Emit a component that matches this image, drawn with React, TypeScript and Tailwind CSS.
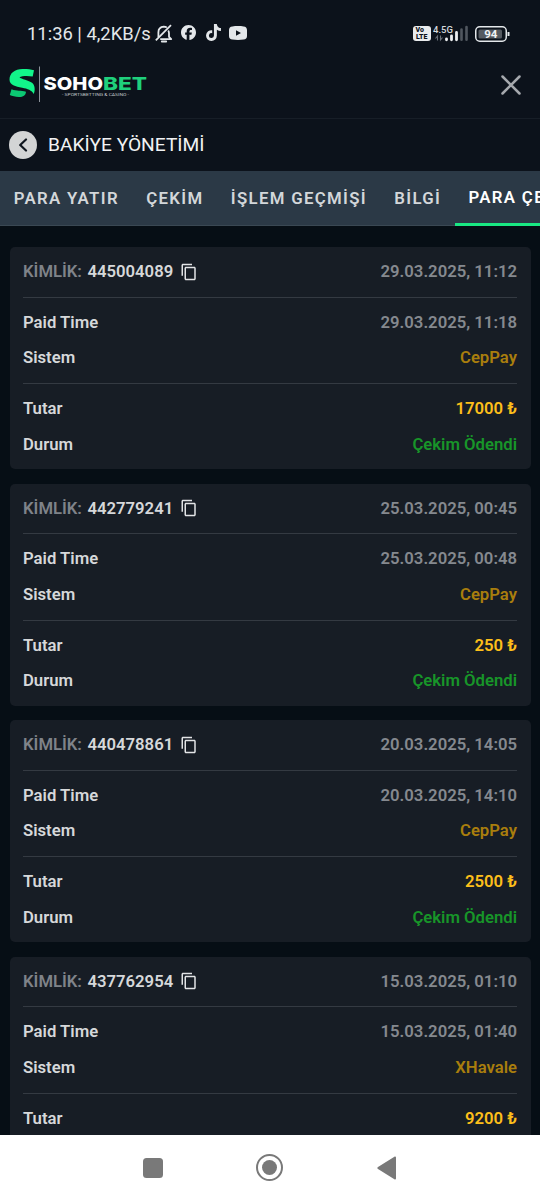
import { FaFacebook, FaTiktok } from 'react-icons/fa6'
import { MdContentCopy } from 'react-icons/md'

interface Withdrawal {
    id: string
    createdAt: string
    paidAt: string
    system: string
    amount: number
    status: string
}

const WITHDRAWALS: Withdrawal[] = [
    { id: '445004089', createdAt: '29.03.2025, 11:12', paidAt: '29.03.2025, 11:18', system: 'CepPay', amount: 17000, status: 'Çekim Ödendi' },
    { id: '442779241', createdAt: '25.03.2025, 00:45', paidAt: '25.03.2025, 00:48', system: 'CepPay', amount: 250, status: 'Çekim Ödendi' },
    { id: '440478861', createdAt: '20.03.2025, 14:05', paidAt: '20.03.2025, 14:10', system: 'CepPay', amount: 2500, status: 'Çekim Ödendi' },
    { id: '437762954', createdAt: '15.03.2025, 01:10', paidAt: '15.03.2025, 01:40', system: 'XHavale', amount: 9200, status: 'Çekim Ödendi' },
]

const TABS = ['PARA YATIR', 'ÇEKİM', 'İŞLEM GEÇMİŞİ', 'BİLGİ', 'PARA ÇEKME']

function BellOffIcon() {
    return (
        <svg width="18" height="19" viewBox="0 0 18 19" fill="none" stroke="currentColor" strokeWidth="1.8">
            <path d="M3.400 13V8.300C3.400 5 5.600 3 8.800 2.700c1.300 0 2.200.3 3 .8M13.200 6.600c.6.9.8 1.600.8 2.600v3.600l2.200 2.400H5.200" strokeLinejoin="round" />
            <path d="M.8 16.400 16 1.200" />
            <path d="M6.800 17.500h4.400" strokeLinecap="round" />
        </svg>
    )
}

function YoutubeIcon() {
    return (
        <svg width="18" height="14" viewBox="0 0 18 14" fill="currentColor">
            <path fillRule="evenodd" d="M3.400.4C6.600 0 11.400 0 14.600.4 16.800.6 18 1.900 18 4v6c0 2.100-1.200 3.400-3.400 3.600-3.200.4-8 .4-11.200 0C1.200 13.400 0 12.100 0 10V4C0 1.900 1.200.6 3.400.4ZM7 4.200v5.600L12 7Z" />
        </svg>
    )
}

function StatusBar() {
    return (
        <div className="flex h-[50px] shrink-0 items-end justify-between pr-[30px] pl-[27px] text-[#e4e7ea]">
            <div className="flex h-[33px] items-center">
                <span className="mr-[1.5px] w-[126px] text-[18.4px] whitespace-nowrap">11:36 | 4,2KB/s</span>
                <BellOffIcon />
                <FaFacebook className="mb-[2px] ml-[8.5px] size-[15px]" />
                <FaTiktok className="mb-[2px] ml-[9px] size-[17px]" />
                <span className="mb-[2px] ml-[7px]"><YoutubeIcon /></span>
            </div>
            <div className="flex h-[33px] items-center">
                <div className="flex h-[15px] w-[17.5px] flex-col items-center justify-center rounded-[3px] bg-[#e9ebed] text-[7px] leading-[7px] font-black text-[#0c121b]">
                    <span className="-ml-1">Vo</span>
                    <span>LTE</span>
                </div>
                <svg className="ml-[2.5px]" width="35" height="19" viewBox="0 0 35 19">
                    <text x="0" y="8.500" fontSize="9.500" fontWeight="500" fill="#d5d9dd" textLength="20">4.5G</text>
                    <path d="M4.500 16.500v-4.500L2.500 14.500M7.500 11.500v4.500L9.500 13.500" stroke="#6a7078" strokeWidth="1.100" fill="none" />
                    <path d="M13.500 15.800v-1M18.500 15.800v-4M23.500 15.800V8.500" stroke="#eceef0" strokeWidth="2.800" strokeLinecap="round" />
                    <path d="M28.500 15.800V5.500M33.500 15.800V3" stroke="#51575f" strokeWidth="2.600" strokeLinecap="round" />
                </svg>
                <svg className="ml-[7px]" width="35" height="16" viewBox="0 0 35 16">
                    <rect x=".75" y=".75" width="30.500" height="14.500" rx="4" fill="none" stroke="#e4e7ea" strokeWidth="1.500" />
                    <rect x="3.500" y="3.500" width="23.500" height="9" rx="1.500" fill="#555a61" />
                    <path d="M33.500 6v4" stroke="#e4e7ea" strokeWidth="2" />
                    <text x="15.800" y="12" fontSize="11.500" fontWeight="700" fill="#f2f3f4" textAnchor="middle">94</text>
                </svg>
            </div>
        </div>
    )
}

function Logo() {
    return (
        <svg width="140" height="38" viewBox="0 0 140 38" className="mt-[5px] overflow-visible">
            <path d="M25 2.300 23.700 8.500C19 7.500 13 7.700 10.500 9.200c1.500 1.800 9.500 3.200 12.500 5.600 3.200 2.600 3.200 7.800 1.800 11.200-2-3.800-6.300-5.300-11.600-6.300C6.500 18.500.5 17 .5 11.500.5 5 5.800 1.200 13.500 1c4.500-.1 8.500.4 11.500 1.300Z" fill="#12f58a" />
            <path d="M2.500 21.300c5.500 2.100 9.500 1 14.500 2.400-.3 3.800-3 5.400-7.200 5.300-3.600-.1-6.600-.9-9-2Z" fill="#0cc873" />
            <path d="M30.500-1.500v35.500" stroke="#8b9199" strokeWidth="1" />
            <g fontFamily="Inter, sans-serif" fontWeight="800" fontSize="18">
                <text x="34.500" y="21.700" fill="#fff" textLength="59.500" lengthAdjust="spacingAndGlyphs">SOHO</text>
                <text x="94" y="21.700" fill="#1fd07c" textLength="44" lengthAdjust="spacingAndGlyphs">BET</text>
            </g>
            <text x="53" y="28.200" fontSize="4" fill="#c3c8ce" textLength="67" lengthAdjust="spacingAndGlyphs">- SPORTSBETTING &amp; CASINO -</text>
        </svg>
    )
}

function SiteHeader() {
    return (
        <header className="flex h-[69px] shrink-0 items-center justify-between border-b border-[#171e27] pr-[19px] pl-[9px]">
            <Logo />
            <svg className="mt-px" width="20" height="20" viewBox="0 0 20 20" stroke="#a5a8ad" strokeWidth="2.500" strokeLinecap="round">
                <path d="M1.500 1.500l17 17M18.500 1.500l-17 17" />
            </svg>
        </header>
    )
}

function PageTitle() {
    return (
        <div className="flex h-[52px] shrink-0 items-center gap-[11px] pl-[9px]">
            <div className="flex size-7 items-center justify-center rounded-full bg-[#d3d4d5]">
                <svg width="9" height="14" viewBox="0 0 9 14" fill="none" stroke="#10161f" strokeWidth="2.200" strokeLinecap="round" strokeLinejoin="round">
                    <path d="M7 1.500 1.200 7 7 12.500" />
                </svg>
            </div>
            <h1 className="pt-px text-[19.2px] text-[#f1f2f4]">BAKİYE YÖNETİMİ</h1>
        </div>
    )
}

function Tabs() {
    return (
        <nav className="flex h-[55px] shrink-0 overflow-hidden bg-[#2b3946]">
            {TABS.map((tab) => {
                const isActive = tab === 'PARA ÇEKME'
                return (
                    <button
                        key={tab}
                        className={`h-[55px] shrink-0 px-[13.7px] text-[16.8px] font-semibold tracking-[1.32px] whitespace-nowrap ${isActive ? 'border-b-3 border-[#19e883] pt-[2px] text-white' : 'border-b border-[#3a4853] pt-[2px] text-[#d3d7da]'}`}
                    >
                        {tab}
                    </button>
                )
            })}
        </nav>
    )
}

function Row({ label, value, valueClass }: { label: string, value: string, valueClass: string }) {
    return (
        <div className="flex h-[35.5px] items-center justify-between pt-[0.5px]">
            <span className="text-[#d6d8da]">{label}</span>
            <span className={valueClass}>{value}</span>
        </div>
    )
}

function WithdrawalCard({ item }: { item: Withdrawal }) {
    return (
        <article className="shrink-0 rounded-[5px] bg-[#171d25] px-[13.5px] text-[16.7px] font-semibold">
            <div className="flex h-[49.5px] items-center justify-between pt-[0.5px]">
                <div className="flex items-center">
                    <span className="text-[#7f8389]">KİMLİK:</span>
                    <span className="ml-[5.5px] text-[#d6d8da]">{item.id}</span>
                    <MdContentCopy className="ml-[7px] size-[18px] text-[#e2e4e6]" />
                </div>
                <span className="text-[#85898f]">{item.createdAt}</span>
            </div>
            <div className="border-t border-[#343a42] pt-[7px] pb-[7.5px]">
                <Row label="Paid Time" value={item.paidAt} valueClass="text-[#85898f]" />
                <Row label="Sistem" value={item.system} valueClass="text-[#a97e0d]" />
            </div>
            <div className="border-t border-[#343a42] py-[7px]">
                <Row label="Tutar" value={`${item.amount} ₺`} valueClass="text-[#fdbf1a]" />
                <Row label="Durum" value={item.status} valueClass="text-[#189529]" />
            </div>
        </article>
    )
}

function NavigationBar() {
    return (
        <footer className="flex h-[65px] shrink-0 items-center justify-between bg-white pr-[143.5px] pl-[142.5px] text-[#797979]">
            <div className="size-5 rounded-[3.5px] bg-current" />
            <div className="flex size-[27px] items-center justify-center rounded-full border-2 border-current">
                <div className="size-[15px] rounded-full bg-current" />
            </div>
            <svg width="20" height="24" viewBox="0 0 20 24" fill="currentColor">
                <path d="M19 1.600v20.800c0 1-.8 1.300-1.600.8L1 13c-.9-.6-.9-1.400 0-2L17.400.8c.8-.5 1.600-.2 1.600.8Z" />
            </svg>
        </footer>
    )
}

export default function App() {
    return (
        <div className="flex h-[1200px] w-[540px] flex-col overflow-hidden bg-[#0c121b] font-[Roboto,sans-serif]">
            <StatusBar />
            <SiteHeader />
            <PageTitle />
            <Tabs />
            <main className="flex min-h-0 flex-1 flex-col gap-[14.5px] overflow-hidden bg-[#060e15] px-[9.5px] pt-[21px]">
                {WITHDRAWALS.map((item) => (
                    <WithdrawalCard key={item.id} item={item} />
                ))}
            </main>
            <NavigationBar />
        </div>
    )
}
